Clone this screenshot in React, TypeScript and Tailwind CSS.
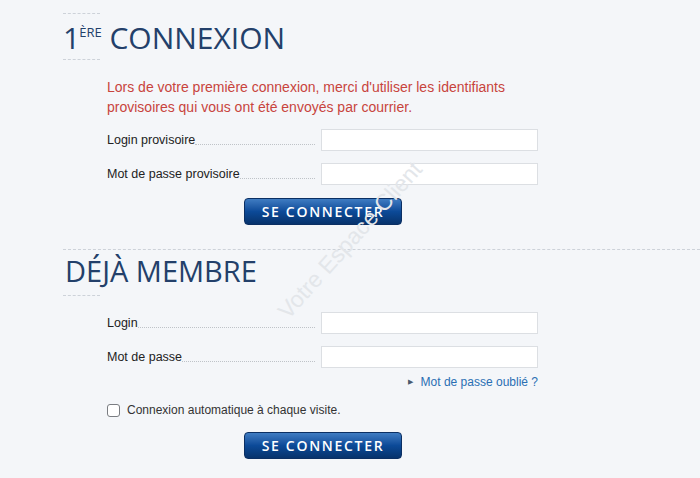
import React from 'react';

const Dash = ({ className }: { className: string }) => (
  <div className={`border-t border-dashed border-[#cdd2d9] ${className}`} />
);

const Field = ({ label, className = '' }: { label: string; className?: string }) => (
  <div className={`flex items-center ${className}`}>
    <div className="flex w-[208px] items-end">
      <span className="text-[12.5px] leading-[16px] text-[#222]">{label}</span>
      <span className="mb-[3px] flex-1 border-b border-dotted border-[#bfc3c8]" />
    </div>
    <div className="ml-[6px] h-[22px] w-[217px] border border-[#dcdfe3] bg-white" />
  </div>
);

const Button = ({ className = '' }: { className?: string }) => (
  <div className={`ml-[137px] flex h-[27px] w-[158px] items-center justify-center rounded-[4px] border border-[#0b2f63] bg-gradient-to-b from-[#3f7cc2] via-[#0c4a98] to-[#07336c] font-['Open_Sans'] text-[14px] font-semibold tracking-[1.7px] text-white ${className}`}>
    SE CONNECTER
  </div>
);

export default function App() {
  return (
    <div className="relative h-[478px] w-[700px] overflow-hidden bg-[#f4f6f9] pt-[13px] font-['Liberation_Sans',Arial,sans-serif]">
      <div className="pl-[63px]">
        <Dash className="w-[37px]" />
        <h2 className="mt-[9px] font-['Open_Sans',sans-serif] text-[30px] leading-[30px] text-[#23406a]">
          1<span className="-ml-[1px] inline-block pt-[3px] align-top text-[13px] leading-[13px]">ÈRE</span> CONNEXION
        </h2>
        <Dash className="mt-[6px] w-[37px]" />

        <div className="pl-[44px]">
          <p className="mt-[17px] text-[14px] leading-[20px] text-[#c8443d]">
            Lors de votre première connexion, merci d'utiliser les identifiants
            <br />
            provisoires qui vous ont été envoyés par courrier.
          </p>
          <Field label="Login provisoire" className="mt-[12px]" />
          <Field label="Mot de passe provisoire" className="mt-[12px]" />
          <Button className="mt-[13px]" />
        </div>

        <Dash className="mt-[24px] w-full" />
        <h2 className="mt-[6px] pl-[2px] font-['Open_Sans',sans-serif] text-[29px] leading-[30px] text-[#23406a]">
          DÉJÀ MEMBRE
        </h2>
        <Dash className="mt-[9px] w-[37px]" />

        <div className="pl-[44px]">
          <Field label="Login" className="mt-[16px]" />
          <Field label="Mot de passe" className="mt-[12px]" />
          <div className="mt-[6px] flex w-[431px] items-center justify-end text-[12px] leading-[16px] text-[#2a6fb3]">
            <span className="mr-[8px] text-[7px] text-[#4a5a6e]">▶</span>
            Mot de passe oublié ?
          </div>
          <div className="mt-[10px] flex items-center">
            <span className="h-[13px] w-[13px] rounded-[3px] border border-[#7a7d82] bg-white" />
            <span className="ml-[7px] text-[12px] leading-[20px] text-[#333]">
              Connexion automatique à chaque visite.
            </span>
          </div>
          <Button className="mt-[12px]" />
        </div>
      </div>

      <div className="pointer-events-none absolute left-[350px] top-[240px] -translate-x-1/2 -translate-y-1/2 -rotate-[48deg] whitespace-nowrap text-[23px] text-[#e3e6ea]">
        Votre Espace Client
      </div>
    </div>
  );
}
